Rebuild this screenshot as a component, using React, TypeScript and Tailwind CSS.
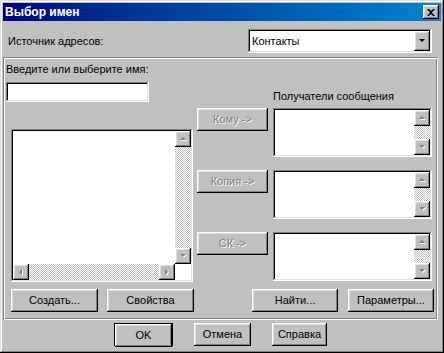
import React from "react";

const RAISED =
  "shadow-[inset_-1px_-1px_#000,inset_1px_1px_#fff,inset_-2px_-2px_#808080,inset_2px_2px_#dfdfdf]";
const SUNKEN =
  "shadow-[inset_-1px_-1px_#fff,inset_1px_1px_#808080,inset_-2px_-2px_#dfdfdf,inset_2px_2px_#000]";
const DITHER = "[background:repeating-conic-gradient(#fff_0_25%,#c0c0c0_0_50%)_0_0/2px_2px]";

function cx(...parts: Array<string | false | undefined>) {
  return parts.filter(Boolean).join(" ");
}

function Arrow({ dir, dark }: { dir: "up" | "down" | "left" | "right"; dark?: boolean }) {
  const pts = {
    up: "4,1 7,4 1,4",
    down: "1,1 7,1 4,4",
    left: "1,4 4,1 4,7",
    right: "1,1 4,4 1,7",
  }[dir];
  const horiz = dir === "left" || dir === "right";
  return (
    <svg width={horiz ? 6 : 8} height={horiz ? 8 : 6} viewBox={horiz ? "0 0 6 8" : "0 0 8 6"}>
      {!dark && (
        <polygon points={pts} fill="#fff" transform="translate(1 1)" />
      )}
      <polygon points={pts} fill={dark ? "#000" : "#808080"} />
    </svg>
  );
}

function ScrollBtn({ dir, dark }: { dir: "up" | "down" | "left" | "right"; dark?: boolean }) {
  return (
    <div className={cx("flex h-[16px] w-[16px] shrink-0 items-center justify-center bg-[#c0c0c0]", RAISED)}>
      <Arrow dir={dir} dark={dark} />
    </div>
  );
}

function VScroll() {
  return (
    <div className="flex h-full w-[16px] flex-col">
      <ScrollBtn dir="up" />
      <div className={cx("flex-1", DITHER)} />
      <ScrollBtn dir="down" />
    </div>
  );
}

function Btn({
  label,
  className,
  disabled,
}: {
  label: string;
  className: string;
  disabled?: boolean;
}) {
  return (
    <div
      className={cx(
        "flex h-[23px] items-center justify-center bg-[#c0c0c0] text-[11px] leading-[13px]",
        RAISED,
        disabled ? "text-[#808080] [text-shadow:1px_1px_0_#fff]" : "text-black",
        className,
      )}
    >
      {label}
    </div>
  );
}

function RecipientBox({ className }: { className?: string }) {
  return (
    <div className={cx("flex h-[49px] w-[159px] justify-end bg-white p-[2px]", SUNKEN, className)}>
      <VScroll />
    </div>
  );
}

export default function App() {
  return (
    <div
      className="flex h-[353px] w-[444px] flex-col bg-[#c0c0c0] p-[3px] text-black shadow-[inset_-1px_-1px_#000,inset_1px_1px_#dfdfdf,inset_-2px_-2px_#808080,inset_2px_2px_#fff]"
      style={{ fontFamily: '"Liberation Sans", Arial, sans-serif' }}
    >
      {/* Title bar */}
      <div className="flex h-[18px] items-center justify-between bg-gradient-to-r from-[#000080] to-[#1084d0] pl-[2px] pr-[2px]">
        <span className="text-[12px] font-bold leading-[14px] text-white">Выбор имен</span>
        <div className={cx("flex h-[14px] w-[16px] items-center justify-center bg-[#c0c0c0]", RAISED)}>
          <svg width="8" height="7" viewBox="0 0 8 7">
            <path d="M0 0h2l2 2 2-2h2L5 3.5 8 7H6L4 5 2 7H0l3-3.5z" fill="#000" />
          </svg>
        </div>
      </div>

      {/* Address source */}
      <div className="mt-[8px] flex h-[24px] items-center justify-between pl-[5px] pr-[9px]">
        <span className="text-[11px] leading-[13px]">Источник адресов:</span>
        <div className={cx("flex h-[24px] w-[184px] items-center justify-between bg-white p-[2px]", SUNKEN)}>
          <span className="pl-[2px] text-[11px] leading-[13px]">Контакты</span>
          <div className={cx("flex h-[20px] w-[16px] items-center justify-center bg-[#c0c0c0]", RAISED)}>
            <Arrow dir="down" dark />
          </div>
        </div>
      </div>

      {/* Panel */}
      <div className="mt-[4px] flex h-[263px] w-[435px] flex-col pl-[3px] pt-[6px] shadow-[inset_1px_1px_#808080,inset_-1px_-1px_#fff,inset_2px_2px_#fff,inset_-2px_-2px_#808080]">
        <div className="flex">
          {/* Left column */}
          <div className="flex w-[187px] flex-col">
            <span className="text-[11px] leading-[13px]">Введите или выберите имя:</span>
            <div className={cx("mt-[6px] h-[20px] w-[143px] bg-white", SUNKEN)} />
            <div
              className={cx(
                "ml-[5px] mt-[27px] grid h-[153px] w-[182px] grid-cols-[1fr_16px] grid-rows-[1fr_16px] bg-white p-[2px]",
                SUNKEN,
              )}
            >
              <div />
              <VScroll />
              <div className="flex">
                <ScrollBtn dir="left" />
                <div className={cx("flex-1", DITHER)} />
                <ScrollBtn dir="right" />
              </div>
              <div className="bg-white" />
            </div>
          </div>

          {/* Middle buttons */}
          <div className="ml-[4px] flex w-[71px] flex-col pt-[45px]">
            <Btn label="Кому ->" className="w-[71px]" disabled />
            <Btn label="Копия ->" className="mt-[39px] w-[71px]" disabled />
            <Btn label="СК ->" className="mt-[39px] w-[71px]" disabled />
          </div>

          {/* Recipients */}
          <div className="ml-[5px] flex w-[159px] flex-col pt-[27px]">
            <span className="text-[11px] leading-[13px]">Получатели сообщения</span>
            <RecipientBox className="mt-[5px]" />
            <RecipientBox className="mt-[13px]" />
            <RecipientBox className="mt-[13px]" />
          </div>
        </div>

        {/* Bottom row of panel */}
        <div className="mt-[7px] flex">
          <Btn label="Создать..." className="ml-[5px] w-[87px]" />
          <Btn label="Свойства" className="ml-[9px] w-[87px]" />
          <Btn label="Найти..." className="ml-[58px] w-[86px]" />
          <Btn label="Параметры..." className="ml-[10px] w-[86px]" />
        </div>
      </div>

      {/* Dialog buttons */}
      <div className="mt-[3px] flex pl-[111px]">
        <div className="h-[23px] w-[59px] border border-black">
          <Btn label="OK" className="h-[21px] w-[57px]" />
        </div>
        <Btn label="Отмена" className="ml-[21px] w-[57px]" />
        <Btn label="Справка" className="ml-[21px] w-[55px]" />
      </div>
    </div>
  );
}
